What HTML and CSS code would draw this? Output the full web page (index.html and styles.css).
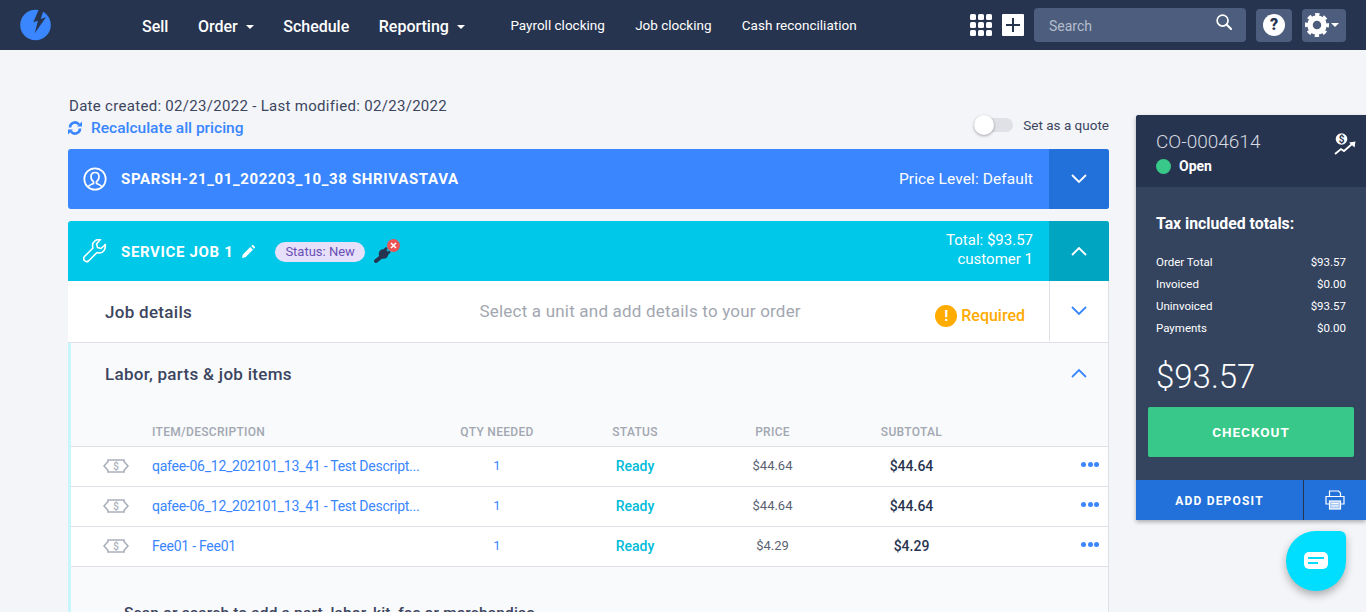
FILE: index.html
```html
<!DOCTYPE html>
<html lang="en">
<head>
    <meta charset="UTF-8">
    <title>CO-0004614</title>
    <link rel="stylesheet" href="styles.css">
</head>
<body>
    <header class="topbar">
        <svg class="logo" width="32" height="32" viewBox="0 0 32 32">
            <circle cx="15.500" cy="16" r="15.300" fill="#3a86ff"/>
            <path fill="#27344f" d="M19 0 13.300 13.300 18 11.700 14.700 24.300 26 8.300 20.700 10 24 0z"/>
        </svg>
        <nav class="nav-main">
            <a>Sell</a>
            <a class="caret">Order</a>
            <a>Schedule</a>
            <a class="caret">Reporting</a>
        </nav>
        <nav class="nav-sub">
            <a>Payroll clocking</a>
            <a>Job clocking</a>
            <a>Cash reconciliation</a>
        </nav>
        <div class="top-tools">
            <svg class="apps" width="22" height="22" viewBox="0 0 22 22" fill="#fff">
                <rect width="6" height="6" rx="1.500"/><rect x="8" width="6" height="6" rx="1.500"/><rect x="16" width="6" height="6" rx="1.500"/>
                <rect y="8" width="6" height="6" rx="1.500"/><rect x="8" y="8" width="6" height="6" rx="1.500"/><rect x="16" y="8" width="6" height="6" rx="1.500"/>
                <rect y="16" width="6" height="6" rx="1.500"/><rect x="8" y="16" width="6" height="6" rx="1.500"/><rect x="16" y="16" width="6" height="6" rx="1.500"/>
            </svg>
            <div class="plus-btn">
                <svg width="14" height="14" viewBox="0 0 14 14"><path d="M7 0v14M0 7h14" stroke="#27344f" stroke-width="2"/></svg>
            </div>
            <div class="search">
                <span>Search</span>
                <svg width="16" height="16" viewBox="0 0 17 17" fill="none" stroke="#fff" stroke-width="1.800"><circle cx="7" cy="7" r="5.800"/><path d="M11.500 11.500 16 16" stroke-linecap="round" stroke-width="2.200"/></svg>
            </div>
            <div class="tool-btn help"><span>?</span></div>
            <div class="tool-btn gear">
                <svg width="24" height="24" viewBox="0 0 24 24" fill="none" stroke="#fff">
                    <circle cx="12" cy="12" r="7" stroke-width="5.500"/>
                    <circle cx="12" cy="12" r="10.200" stroke-width="3.600" stroke-dasharray="4.200 3.810" stroke-dashoffset="2.100"/>
                </svg>
                <i class="tri"></i>
            </div>
        </div>
    </header>

    <div class="page">
        <main class="content">
            <div class="meta">
                <div>
                    <div class="dates">Date created: 02/23/2022 - Last modified: 02/23/2022</div>
                    <a class="recalc">
                        <svg width="14" height="14" viewBox="0 0 14 14" fill="none" stroke="#3a86ff" stroke-width="2.600">
                            <path d="M2 6.500A5 5 0 0 1 11 3.500M12 7.500A5 5 0 0 1 3 10.500"/>
                            <path d="M9 5.500h5v-5zM5 8.500H0v5z" fill="#3a86ff" stroke="none"/>
                        </svg>
                        Recalculate all pricing
                    </a>
                </div>
                <div class="quote">
                    <span class="switch"><i></i></span>
                    Set as a quote
                </div>
            </div>

            <section class="bar bar-customer">
                <svg class="bar-icon" width="24" height="24" viewBox="0 0 24 24" fill="none" stroke="#fff" stroke-width="1.700">
                    <circle cx="12" cy="12" r="10.700"/>
                    <path d="M5 20c1-2.500 3.500-2.500 5.500-3.500v-1.800C8.800 13.500 8 11.500 8 9.500 8 7 9.800 5.500 12 5.500s4 1.500 4 4c0 2-.8 4-2.500 5.200v1.800c2 1 4.500 1 5.500 3.500"/>
                </svg>
                <strong class="bar-title">SPARSH-21_01_202203_10_38 SHRIVASTAVA</strong>
                <span class="bar-right">Price Level: Default</span>
                <div class="bar-toggle">
                    <svg width="16" height="10" viewBox="0 0 16 10" fill="none" stroke="#fff" stroke-width="1.800"><path d="M1 1l7 7 7-7"/></svg>
                </div>
            </section>

            <section class="job">
                <div class="bar bar-job">
                    <svg class="bar-icon" width="24" height="24" viewBox="0 0 24 24" fill="none" stroke="#fff" stroke-width="1.600" stroke-linejoin="round">
                        <path d="M22.500 5.500 18 9.500l-3.500-1-1-3.500 4-4.500C13.500 0 9.500 2.500 9.500 6.500c0 1 .2 1.800.5 2.500L1.500 17.500a3 3 0 0 0 0 4 3 3 0 0 0 4 .5l8.500-8.500c.8.300 1.500.5 2.500.5 4 0 6.500-4 5.500-8.500z"/>
                    </svg>
                    <strong class="bar-title">SERVICE JOB 1</strong>
                    <svg class="pencil" width="13" height="13" viewBox="0 0 13 13" fill="#fff"><path d="M0 13l.8-3.500L8.300 2l2.700 2.700-7.500 7.500zM9.200 1.100 10 .3a1 1 0 0 1 1.400 0l1.300 1.300a1 1 0 0 1 0 1.400l-.8.800z"/></svg>
                    <span class="status-pill">Status: New</span>
                    <span class="plug">
                        <svg width="18" height="16" viewBox="0 0 18 16" fill="none" stroke="#27344f">
                            <path d="M2 14 7 10" stroke-width="4" stroke-linecap="round"/>
                            <circle cx="9.500" cy="7" r="4.800" fill="#27344f" stroke="none"/>
                            <path d="M10 3.500 13 .8M13 7l3-2.500" stroke-width="2.400"/>
                        </svg>
                        <i class="plug-x">
                            <svg width="7" height="7" viewBox="0 0 7 7"><path d="M1 1l5 5M6 1 1 6" stroke="#fff" stroke-width="1.500"/></svg>
                        </i>
                    </span>
                    <div class="job-total">
                        <div>Total: $93.57</div>
                        <div>customer 1</div>
                    </div>
                    <div class="bar-toggle">
                        <svg width="16" height="10" viewBox="0 0 16 10" fill="none" stroke="#fff" stroke-width="1.800"><path d="M1 9l7-7 7 7"/></svg>
                    </div>
                </div>

                <div class="details">
                    <h3 class="section-title">Job details</h3>
                    <span class="details-hint">Select a unit and add details to your order</span>
                    <span class="required"><i>!</i>Required</span>
                    <div class="details-toggle">
                        <svg width="16" height="10" viewBox="0 0 16 10" fill="none" stroke="#3a86ff" stroke-width="1.800"><path d="M1 1l7 7 7-7"/></svg>
                    </div>
                </div>

                <div class="items">
                    <div class="items-head">
                        <h3 class="section-title">Labor, parts &amp; job items</h3>
                        <svg width="16" height="10" viewBox="0 0 16 10" fill="none" stroke="#3a86ff" stroke-width="1.800"><path d="M1 9l7-7 7 7"/></svg>
                    </div>
                    <div class="row row-head">
                        <span></span>
                        <span>ITEM/DESCRIPTION</span>
                        <span class="c">QTY NEEDED</span>
                        <span class="c">STATUS</span>
                        <span class="c">PRICE</span>
                        <span class="c">SUBTOTAL</span>
                        <span></span>
                    </div>
                    <div class="row">
                        <svg class="fee" width="26" height="14" viewBox="0 0 26 14" fill="none" stroke="#a9afba" stroke-width="1.600"><path d="M5 1h16v1.500l4 4.500-4 4.500V13H5v-1.500L1 7l4-4.500z"/><text x="13" y="10.500" class="fee-s">$</text></svg>
                        <a class="item-name">qafee-06_12_202101_13_41 - Test Descript...</a>
                        <span class="c link">1</span>
                        <span class="c ready">Ready</span>
                        <span class="c price">$44.64</span>
                        <span class="c sub">$44.64</span>
                        <span class="dots"><i></i><i></i><i></i></span>
                    </div>
                    <div class="row">
                        <svg class="fee" width="26" height="14" viewBox="0 0 26 14" fill="none" stroke="#a9afba" stroke-width="1.600"><path d="M5 1h16v1.500l4 4.500-4 4.500V13H5v-1.500L1 7l4-4.500z"/><text x="13" y="10.500" class="fee-s">$</text></svg>
                        <a class="item-name">qafee-06_12_202101_13_41 - Test Descript...</a>
                        <span class="c link">1</span>
                        <span class="c ready">Ready</span>
                        <span class="c price">$44.64</span>
                        <span class="c sub">$44.64</span>
                        <span class="dots"><i></i><i></i><i></i></span>
                    </div>
                    <div class="row">
                        <svg class="fee" width="26" height="14" viewBox="0 0 26 14" fill="none" stroke="#a9afba" stroke-width="1.600"><path d="M5 1h16v1.500l4 4.500-4 4.500V13H5v-1.500L1 7l4-4.500z"/><text x="13" y="10.500" class="fee-s">$</text></svg>
                        <a class="item-name">Fee01 - Fee01</a>
                        <span class="c link">1</span>
                        <span class="c ready">Ready</span>
                        <span class="c price">$4.29</span>
                        <span class="c sub">$4.29</span>
                        <span class="dots"><i></i><i></i><i></i></span>
                    </div>
                    <p class="scan">Scan or search to add a part, labor, kit, fee or merchandise</p>
                </div>
            </section>
        </main>

        <aside class="summary">
            <div class="summary-top">
                <div>
                    <div class="co-number">CO-0004614</div>
                    <div class="co-status"><i></i>Open</div>
                </div>
                <svg class="trend" width="22" height="22" viewBox="0 0 22 22">
                    <circle cx="7.500" cy="6" r="5.800" fill="#fff"/>
                    <text x="7.500" y="9.500" class="trend-s">$</text>
                    <path d="M1 21l6-5 3 2 8-7" fill="none" stroke="#fff" stroke-width="1.800"/>
                    <path d="M15 9.500l6.500-1-1 6z" fill="#fff"/>
                </svg>
            </div>
            <div class="summary-body">
                <h4>Tax included totals:</h4>
                <div class="sum-row"><span>Order Total</span><span>$93.57</span></div>
                <div class="sum-row"><span>Invoiced</span><span>$0.00</span></div>
                <div class="sum-row"><span>Uninvoiced</span><span>$93.57</span></div>
                <div class="sum-row"><span>Payments</span><span>$0.00</span></div>
                <div class="sum-total">$93.57</div>
                <button class="checkout">CHECKOUT</button>
            </div>
            <div class="summary-foot">
                <span class="deposit">ADD DEPOSIT</span>
                <span class="print">
                    <svg width="20" height="20" viewBox="0 0 20 20" fill="none" stroke="#fff" stroke-width="1.200">
                        <path d="M4.500 6V1h9l2 2v3M4.500 14H1V6.500h18V14h-3.500"/>
                        <rect x="4.500" y="11" width="11" height="8" fill="#a9c8f5"/>
                        <path d="M6.500 13.500h7M6.500 16h7"/>
                    </svg>
                </span>
            </div>
        </aside>
    </div>

    <div class="chat">
        <svg width="24" height="18" viewBox="0 0 24 18"><rect width="24" height="17" rx="5" fill="#fff"/><path d="M4 6h16M4 11h10" stroke="#00deff" stroke-width="2"/></svg>
    </div>
</body>
</html>
```

FILE: styles.css
```css
* {
    margin: 0;
    padding: 0;
    box-sizing: border-box;
}

html, body {
    height: 100%;
    overflow: hidden;
}

body {
    font-family: Roboto, "Liberation Sans", sans-serif;
    background: #f3f5f8;
    color: #27344f;
}

.topbar {
    height: 50px;
    background: #27344f;
    display: flex;
    align-items: center;
    color: #fff;
    padding: 0 20px;
}

.logo {
    flex: none;
}

.nav-main {
    display: flex;
    margin-left: 90px;
    padding-top: 2px;
    gap: 29.500px;
    font-size: 16px;
    font-weight: 500;
}

.caret::after {
    content: "";
    display: inline-block;
    margin-left: 8px;
    vertical-align: 3px;
    border: 4px solid transparent;
    border-top-color: #fff;
    border-bottom: 0;
}

.nav-sub {
    display: flex;
    margin-left: 45.500px;
    gap: 30.300px;
    font-size: 13.500px;
}

.top-tools {
    margin-left: auto;
    display: flex;
    align-items: center;
}

.apps {
    margin-right: 10px;
}

.plus-btn {
    width: 22px;
    height: 22px;
    background: #fff;
    border-radius: 1px;
    display: flex;
    align-items: center;
    justify-content: center;
    margin-right: 10px;
}

.search {
    width: 212px;
    height: 34px;
    background: #4d5d7d;
    border-radius: 4px;
    display: flex;
    align-items: center;
    justify-content: space-between;
    padding: 0 14px 0 15px;
    font-size: 14px;
    color: #b5bdcc;
    margin-right: 10px;
}

.search span {
    padding-top: 2px;
}

.search svg {
    margin-top: -6px;
}

.tool-btn {
    height: 33px;
    background: #4d5d7d;
    border-radius: 4px;
    display: flex;
    align-items: center;
}

.help {
    width: 36px;
    justify-content: center;
    margin-right: 10px;
}

.help span {
    width: 22px;
    height: 22px;
    border-radius: 50%;
    background: #fff;
    color: #27344f;
    font-size: 16px;
    font-weight: 900;
    line-height: 22px;
    text-align: center;
}

.gear {
    width: 44px;
    padding-left: 3px;
    gap: 2px;
}

.tri {
    border: 4px solid transparent;
    border-top-color: #fff;
    border-bottom: 0;
}

.page {
    display: flex;
    align-items: flex-start;
    padding-left: 68px;
}

.content {
    width: 1041px;
    flex: none;
}

.meta {
    height: 99px;
    padding-top: 47px;
    display: flex;
    justify-content: space-between;
}

.dates {
    font-size: 15px;
    letter-spacing: .3px;
    line-height: 18px;
    padding-left: 1px;
    color: #3c4560;
}

.recalc {
    display: flex;
    align-items: center;
    gap: 9px;
    font-size: 15.500px;
    font-weight: 500;
    color: #3a86ff;
    line-height: 26px;
}

.quote {
    display: flex;
    align-items: center;
    height: 20px;
    margin-top: 18px;
    font-size: 13.500px;
    color: #3c4560;
}

.switch {
    width: 39px;
    height: 14px;
    background: #dfe1e6;
    border-radius: 7px;
    margin-right: 10px;
    display: flex;
    align-items: center;
}

.switch i {
    width: 20px;
    height: 20px;
    background: #fff;
    border-radius: 50%;
    box-shadow: 0 1px 3px rgba(0,0,0,.35);
}

.bar {
    height: 60px;
    display: flex;
    align-items: center;
    color: #fff;
    border-radius: 3px 3px 0 0;
    padding-left: 15px;
}

.bar-customer {
    background: #3a86ff;
    border-radius: 3px;
    margin-bottom: 12px;
}

.bar-job {
    background: #00c8e8;
}

.bar-icon {
    flex: none;
    margin-right: 14px;
}

.bar-title {
    font-size: 15px;
    font-weight: 700;
    letter-spacing: .65px;
}

.bar-job .bar-title {
    margin-top: 2px;
}

.bar-right {
    margin-left: auto;
    font-size: 15.500px;
    letter-spacing: .1px;
    padding-right: 16px;
}

.bar-toggle {
    width: 60px;
    height: 60px;
    flex: none;
    display: flex;
    align-items: center;
    justify-content: center;
    background: #2270d9;
    border-radius: 0 3px 3px 0;
}

.bar-job .bar-toggle {
    background: #00a6c1;
    border-radius: 0 3px 0 0;
}

.pencil {
    margin: 0 0 0 9px;
}

.status-pill {
    margin: 2px 0 0 20px;
    height: 20px;
    line-height: 20px;
    padding: 0 10px;
    border-radius: 10px;
    background: #e6e0fa;
    color: #6a50b5;
    font-size: 13px;
}

.plug {
    position: relative;
    margin: 2px 0 0 9px;
    width: 26px;
    height: 20px;
    padding-top: 5px;
}

.plug-x {
    position: absolute;
    top: -3px;
    right: 0;
    width: 13px;
    height: 13px;
    background: #ea5455;
    border-radius: 50%;
    display: flex;
    align-items: center;
    justify-content: center;
}

.job-total {
    margin: 0 0 3px auto;
    padding-right: 16px;
    text-align: right;
    font-size: 15px;
    line-height: 19px;
}

.job {
    background: #fff;
}

.section-title {
    font-size: 17px;
    font-weight: 500;
    letter-spacing: .3px;
    color: #3c4560;
}

.details {
    height: 62px;
    display: flex;
    align-items: center;
    padding-left: 37px;
    border-bottom: 1px solid #dfe1e6;
    border-right: 1px solid #dfe1e6;
}

.details-hint {
    flex: 1;
    text-align: center;
    font-size: 17px;
    letter-spacing: .2px;
    color: #a2a7b1;
    padding-left: 153px;
    margin-top: -2px;
}

.required {
    display: flex;
    align-items: center;
    gap: 4px;
    margin: 8px 24px 0 0;
    font-size: 16px;
    font-weight: 500;
    color: #ffab00;
}

.required i {
    width: 22px;
    height: 22px;
    border-radius: 50%;
    background: #ffab00;
    color: #fff;
    font-style: normal;
    font-weight: 700;
    font-size: 15px;
    line-height: 22px;
    text-align: center;
}

.details-toggle {
    width: 59px;
    height: 60px;
    align-self: flex-start;
    flex: none;
    border-left: 1px solid #dfe1e6;
    display: flex;
    align-items: center;
    justify-content: center;
}

.items {
    background: #f9fafc;
    border-left: 3px solid #c9f5fc;
    border-right: 1px solid #dfe1e6;
    height: 300px;
}

.items-head {
    height: 72px;
    display: flex;
    align-items: center;
    justify-content: space-between;
    padding: 0 21px 10px 34px;
}

.items-head svg {
    margin-top: -2px;
}

.row {
    display: grid;
    grid-template-columns: 81px 290px 110px 166px 109px 169px 1fr;
    height: 40px;
    align-items: center;
    border-bottom: 1px solid #dfe1e6;
    padding-bottom: 2px;
    background: #fff;
    font-size: 14px;
}

.row-head {
    height: 32px;
    background: transparent;
    font-size: 12px;
    font-weight: 500;
    letter-spacing: .3px;
    color: #a2a7b1;
    align-items: start;
    padding: 10px 0 0;
}

.c {
    text-align: center;
}

.fee {
    justify-self: end;
    margin-right: 23px;
}

.fee-s {
    font-family: Roboto, sans-serif;
    font-size: 10px;
    font-weight: 500;
    text-anchor: middle;
    fill: #a9afba;
    stroke: none;
}

.trend-s {
    font-family: Roboto, sans-serif;
    font-size: 10px;
    font-weight: 700;
    text-anchor: middle;
    fill: #27344f;
}

.item-name {
    font-size: 14px;
    letter-spacing: -.25px;
    color: #3a86ff;
    white-space: nowrap;
}

.link {
    font-size: 13px;
    color: #3a86ff;
}

.ready {
    color: #00bcd8;
    font-weight: 500;
}

.price {
    font-size: 13px;
    color: #5c6272;
}

.sub {
    font-weight: 500;
    color: #27344f;
}

.dots {
    display: flex;
    gap: 1.500px;
    justify-content: flex-end;
    padding-right: 9px;
    margin-top: -3px;
}

.dots i {
    width: 5px;
    height: 5px;
    border-radius: 50%;
    background: #3a86ff;
}

.scan {
    margin: 37px 0 0 53px;
    font-size: 15.500px;
    letter-spacing: .15px;
    font-weight: 500;
    color: #3c4560;
}

.summary {
    width: 230px;
    flex: none;
    margin: 65px 0 0 27px;
    background: #34445f;
    box-shadow: 0 2px 4px rgba(0,0,0,.3);
    border-radius: 3px 0 0 0;
}

.summary-top {
    height: 72px;
    background: #27344f;
    border-radius: 3px 0 0 0;
    display: flex;
    justify-content: space-between;
    padding: 15px 10px 0 20px;
    color: #fff;
}

.co-number {
    font-size: 19px;
    font-weight: 300;
    color: #d5d9e0;
    line-height: 24px;
}

.co-status {
    display: flex;
    align-items: center;
    gap: 8px;
    font-size: 14px;
    font-weight: 700;
    margin-top: 3px;
    line-height: 18px;
}

.co-status i {
    width: 15px;
    height: 15px;
    border-radius: 50%;
    background: #38c98a;
}

.trend {
    margin-top: 3px;
}

.summary-body {
    height: 293px;
    padding: 28px 12px 0;
    color: #fff;
}

.summary-body h4 {
    font-size: 15.800px;
    font-weight: 700;
    margin: 0 8px 18px;
    line-height: 18px;
}

.sum-row {
    display: flex;
    justify-content: space-between;
    font-size: 11.500px;
    line-height: 22px;
    margin: 0 8px;
}

.sum-total {
    font-size: 33px;
    font-weight: 300;
    margin: 16px 8px 0;
    line-height: 44px;
}

.checkout {
    display: block;
    width: 206px;
    height: 50px;
    margin-top: 8px;
    border: 0;
    border-radius: 2px;
    background: #38c98a;
    color: #fff;
    font-family: inherit;
    font-size: 13.500px;
    font-weight: 700;
    letter-spacing: 1px;
}

.summary-foot {
    height: 40px;
    background: #2270d9;
    display: flex;
    color: #fff;
}

.deposit {
    width: 168px;
    text-align: center;
    line-height: 42px;
    font-size: 12px;
    font-weight: 700;
    letter-spacing: 1.200px;
    border-right: 1px solid #27344f;
}

.print {
    flex: 1;
    display: flex;
    align-items: center;
    justify-content: center;
}

.chat {
    position: fixed;
    left: 1286px;
    top: 531px;
    width: 60px;
    height: 60px;
    background: #00deff;
    border-radius: 50% 6px 50% 50%;
    box-shadow: 0 4px 8px rgba(0,0,0,.3);
    display: flex;
    align-items: center;
    justify-content: center;
}
```
